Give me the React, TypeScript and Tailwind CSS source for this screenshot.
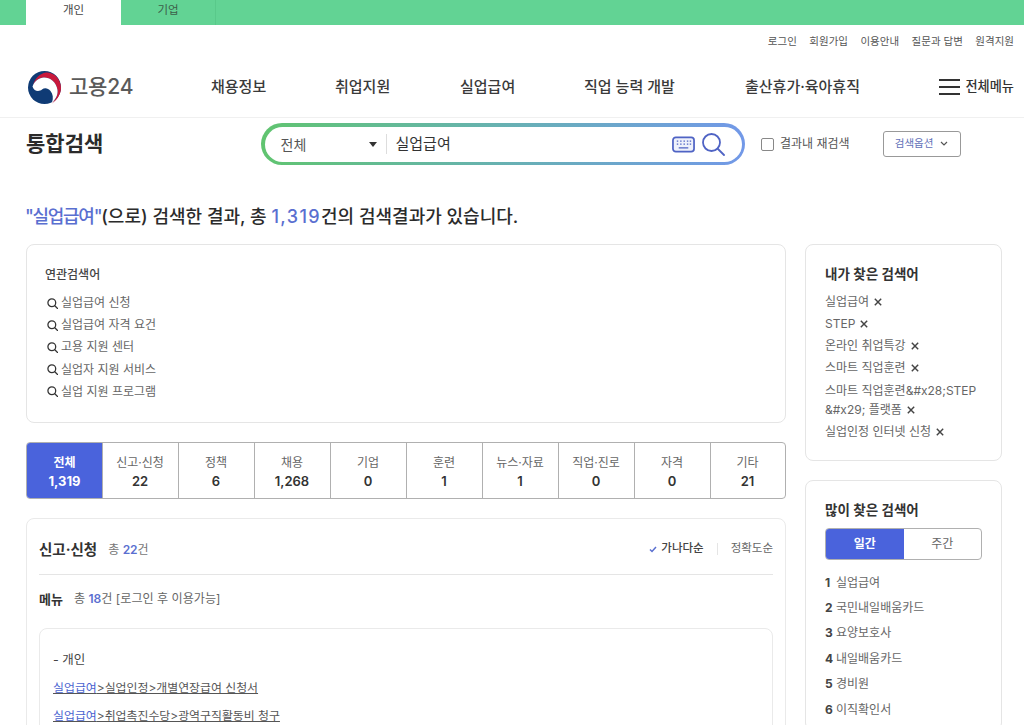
import React from "react";

const nav = ["채용정보", "취업지원", "실업급여", "직업 능력 개발", "출산휴가·육아휴직"];
const navW = ["w-[124px]", "w-[125px]", "w-[124px]", "w-[161px]", "w-[190px]"];
const utils = ["로그인", "회원가입", "이용안내", "질문과 답변", "원격지원"];
const related = ["실업급여 신청", "실업급여 자격 요건", "고용 지원 센터", "실업자 지원 서비스", "실업 지원 프로그램"];
const tabs: [string, string][] = [
  ["전체", "1,319"], ["신고·신청", "22"], ["정책", "6"], ["채용", "1,268"], ["기업", "0"],
  ["훈련", "1"], ["뉴스·자료", "1"], ["직업·진로", "0"], ["자격", "0"], ["기타", "21"],
];
const mine = ["실업급여", "STEP", "온라인 취업특강", "스마트 직업훈련"];
const popular = ["실업급여", "국민내일배움카드", "요양보호사", "내일배움카드", "경비원", "이직확인서"];

function Logo() {
  return (
    <svg width="33" height="33" viewBox="0 0 33 33" className="shrink-0">
      <circle cx="16.500" cy="16.500" r="16.500" fill="#0f3b75" />
      <path d="M5 14C7 7 12 2.500 18 1.500C26 1 33 8 33 17C33 23 29 29 24 32.500C28 28 30 24 29.500 19C28.500 11 22 6.500 16 6.500C11 6.500 7 10 5 14Z" fill="#c8193c" />
      <path d="M4.500 15.500C6.500 10 11 6.500 16 6.500C22 6.500 28.500 11 29.500 19C30 24 28 28 24 31.500C25.500 27 25 23 22.500 20C20 17 16.500 16.500 14 18.500C11 21 6 20.500 4.500 15.500Z" fill="#ffffff" />
    </svg>
  );
}

function Mag({ size = 12, color = "#333", w = 2 }: { size?: number; color?: string; w?: number }) {
  return (
    <svg width={size} height={size} viewBox="0 0 24 24" fill="none" stroke={color} strokeWidth={w} strokeLinecap="round" className="shrink-0">
      <circle cx="10.500" cy="10.500" r="8.500" />
      <path d="M17 17l6 6" />
    </svg>
  );
}

function Close() {
  return (
    <svg width="8" height="8" viewBox="0 0 10 10" stroke="#444" strokeWidth="1.800" className="ml-[5px] shrink-0">
      <path d="M1 1l8 8M9 1l-8 8" />
    </svg>
  );
}

export default function App() {
  return (
    <div className="h-[725px] overflow-hidden bg-white text-[#333] font-['Inter','Noto_Sans_CJK_KR',sans-serif]">
      <div className="h-[25px] bg-[#62d394] pl-[26px] flex text-[11.500px]">
        <div className="w-[95px] bg-white flex items-center justify-center text-[#444] pb-[4px]">개인</div>
        <div className="w-[95px] border-r border-[#59c98a] flex items-center justify-center text-[#3d5e4a] pb-[4px]">기업</div>
      </div>

      <div className="h-[32px] flex justify-end items-center gap-[12.500px] pr-[10px] pt-[2px] text-[10.500px] text-[#555]">
        {utils.map((u) => <span key={u}>{u}</span>)}
      </div>

      <div className="h-[61px] flex items-center pl-[28px] pr-[10px] border-b border-[#f0f0f0]">
        <div className="w-[183px] flex items-center gap-[8px]">
          <Logo />
          <span className="text-[21px] font-medium text-[#5a5a5a] tracking-[-0.2px]">고용24</span>
        </div>
        <div className="flex items-center text-[15px] font-medium text-[#3a3a3a]">
          {nav.map((n, i) => <span key={n} className={navW[i]}>{n}</span>)}
        </div>
        <div className="ml-auto flex items-center gap-[5px]">
          <div className="flex flex-col gap-[5px] w-[21px]">
            <div className="h-[2px] bg-[#333]" /><div className="h-[2px] bg-[#333]" /><div className="h-[2px] bg-[#333]" />
          </div>
          <span className="text-[13.200px] font-medium text-[#333]">전체메뉴</span>
        </div>
      </div>

      <div className="h-[52px] flex items-center pl-[26px]">
        <h1 className="w-[235px] text-[21px] font-bold text-[#2b2b2b]">통합검색</h1>
        <div className="w-[484px] h-[42px] rounded-full p-[3.500px] bg-gradient-to-r from-[#60c46f] to-[#7298e8]">
          <div className="h-full rounded-full bg-white flex items-center pl-[16px] pr-[17px] text-[14px]">
            <span className="w-[88px] text-[#555]">전체</span>
            <span className="w-0 h-0 border-l-[4px] border-r-[4px] border-t-[5px] border-l-transparent border-r-transparent border-t-[#333] mr-[9px]" />
            <span className="w-px h-[20px] bg-[#ddd] mr-[9px]" />
            <span className="text-[15px] text-[#333] flex-1">실업급여</span>
            <svg width="23" height="17" viewBox="0 0 24 17" fill="none" className="mr-[6px]">
              <rect x="1" y="1" width="22" height="15" rx="3" fill="#eef1fb" stroke="#4f63c4" strokeWidth="1.800" />
              <path d="M5 5h1.500M8.500 5h1.500M12 5h1.500M15.500 5h1.500M5 8h1.500M8.500 8h1.500M12 8h1.500M15.500 8h1.500M18.500 5h1.500M18.500 8h1.500M7 12h10" stroke="#4f63c4" strokeWidth="1.300" />
            </svg>
            <Mag size={24} color="#4f63c4" w={1.800} />
          </div>
        </div>
        <div className="ml-[16px] w-[13px] h-[13px] border border-[#888] rounded-[2px]" />
        <span className="ml-[6px] text-[12px] text-[#555] pb-[1px]">결과내 재검색</span>
        <div className="ml-[33px] w-[78px] h-[26px] border border-[#999] rounded-[3px] flex items-center justify-center gap-[7px] text-[10.500px] text-[#6170b8]">
          검색옵션
          <svg width="8" height="6" viewBox="0 0 8 6" fill="none" stroke="#555" strokeWidth="1.200"><path d="M1 1l3 3 3-3" /></svg>
        </div>
      </div>

      <div className="pl-[26px] pr-[22px] pt-[34px]">
        <p className="text-[18px] font-medium leading-[26px] text-[#2b2b2b] -ml-[1px]">
          <span className="text-[#5a6fd0] tracking-[-1.300px]">"실업급여"</span>(으로) 검색한 결과, 총 <span className="text-[#5a6fd0] tracking-[1.400px]">1,319</span>건의 검색결과가 있습니다.
        </p>

        <div className="mt-[14px] flex gap-[19px] items-start">
          <div className="w-[760px] shrink-0">
            <div className="h-[179px] border border-[#e5e5e5] rounded-[8px] pl-[18px] pt-[20px]">
              <div className="text-[12px] font-medium text-[#444] leading-[20px] mb-[7px]">연관검색어</div>
              {related.map((r) => (
                <div key={r} className="h-[22.200px] flex items-center gap-[3px] pl-[2px] text-[12px] text-[#666]">
                  <Mag size={11} color="#333" w={2.800} />
                  {r}
                </div>
              ))}
            </div>

            <div className="mt-[19px] h-[57px] grid grid-cols-[75px_repeat(8,76px)_75px] border border-[#b0b0b0] rounded-[4px] overflow-hidden">
              {tabs.map(([a, b], i) => (
                <div key={a} className={i === 0 ? "bg-[#4a63dc] text-white flex flex-col items-center justify-center pt-[2px]" : "border-l border-[#b0b0b0] flex flex-col items-center justify-center pt-[2px] pr-[1px]"}>
                  <span className={i === 0 ? "text-[12px] font-bold leading-[19px]" : "text-[12px] text-[#666] leading-[19px]"}>{a}</span>
                  <span className={i === 0 ? "text-[13px] font-bold leading-[19px]" : "text-[13px] font-semibold text-[#333] leading-[19px]"}>{b}</span>
                </div>
              ))}
            </div>

            <div className="mt-[19px] border border-[#eaeaea] rounded-[8px] px-[12px]">
              <div className="h-[56px] flex items-center border-b border-[#e5e5e5] pt-[6px]">
                <span className="text-[14.500px] font-bold text-[#333]">신고·신청</span>
                <span className="ml-[11px] text-[12px] text-[#777]">총 <b className="text-[#5a6fd0] font-semibold">22</b>건</span>
                <div className="ml-auto flex items-center text-[11.500px] -mt-[1px]">
                  <svg width="8" height="7" viewBox="0 0 8 7" fill="none" stroke="#5a6fd0" strokeWidth="1.500" className="mr-[4px]"><path d="M1 3.500l2 2 4-4.500" /></svg>
                  <span className="font-medium text-[#444]">가나다순</span>
                  <span className="w-px h-[12px] bg-[#e5e5e5] mx-[13px]" />
                  <span className="text-[#666]">정확도순</span>
                </div>
              </div>
              <div className="h-[53px] flex items-center pb-[4px]">
                <span className="text-[13px] font-bold text-[#333]">메뉴</span>
                <span className="ml-[11px] text-[12.100px] text-[#666]">총 <b className="text-[#5a6fd0] font-semibold">18</b>건 [로그인 후 이용가능]</span>
              </div>
              <div className="border border-[#eaeaea] rounded-[8px] px-[13px] pt-[16px] pb-[20px] text-[11.900px] text-[#555] leading-[28.500px]">
                <div className="text-[12.500px] text-[#444] mt-[1px] -mb-[1px]">- 개인</div>
                <div className="underline"><span className="text-[#4a63d0]">실업급여</span>&gt;실업인정&gt;개별연장급여 신청서</div>
                <div className="underline"><span className="text-[#4a63d0]">실업급여</span>&gt;취업촉진수당&gt;광역구직활동비 청구</div>
              </div>
            </div>
          </div>

          <div className="w-[197px] shrink-0">
            <div className="h-[217px] border border-[#e5e5e5] rounded-[8px] pl-[19px] pr-[14px] pt-[18px] text-[12px] text-[#666]">
              <div className="text-[13.500px] font-semibold text-[#333] leading-[22px] mb-[6px]">내가 찾은 검색어</div>
              {mine.map((m) => (
                <div key={m} className="h-[22px] flex items-center">{m}<Close /></div>
              ))}
              <div className="leading-[19px] mt-[2px] break-all">스마트 직업훈련&amp;#x28;STEP</div>
              <div className="h-[19px] flex items-center">&amp;#x29; 플랫폼<Close /></div>
              <div className="h-[26px] flex items-center">실업인정 인터넷 신청<Close /></div>
            </div>

            <div className="mt-[19px] border border-[#e5e5e5] rounded-[8px] px-[19px] pt-[18px] pb-[8px]">
              <div className="text-[13.500px] font-semibold text-[#333] leading-[22px] mb-[7px]">많이 찾은 검색어</div>
              <div className="h-[32px] grid grid-cols-2 border border-[#b0b0b0] rounded-[4px] overflow-hidden text-[12px] mb-[10px]">
                <div className="bg-[#4a63dc] text-white font-bold flex items-center justify-center">일간</div>
                <div className="text-[#666] flex items-center justify-center">주간</div>
              </div>
              {popular.map((p, i) => (
                <div key={p} className="h-[25.400px] flex items-center text-[12px] text-[#666]">
                  <b className="font-bold text-[#444] w-[11px]">{i + 1}</b>{p}
                </div>
              ))}
            </div>
          </div>
        </div>
      </div>
    </div>
  );
}
